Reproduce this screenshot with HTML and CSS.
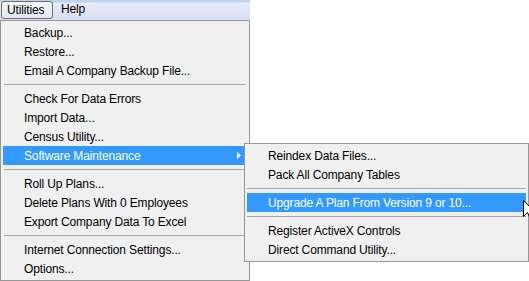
FILE: index.html
```html
<!DOCTYPE html>
<html lang="en">
<head>
  <meta charset="UTF-8">
  <meta name="viewport" content="width=device-width, initial-scale=1.0">
  <title>Utilities menu</title>
  <link rel="stylesheet" href="styles.css">
</head>
<body>
  <div class="screen">
    <div class="menubar">
      <span class="bar-item open">Utilities</span>
      <span class="bar-item">Help</span>
    </div>

    <div class="menu">
      <div class="item">Backup...</div>
      <div class="item">Restore...</div>
      <div class="item">Email A Company Backup File...</div>
      <div class="separator"></div>
      <div class="item">Check For Data Errors</div>
      <div class="item">Import Data...</div>
      <div class="item">Census Utility...</div>
      <div class="item selected">
        <span>Software Maintenance</span>
        <svg class="arrow" width="4" height="7" viewBox="0 0 4 7"><polygon points="0,0 4,3.5 0,7" fill="#ffffff"/></svg>
      </div>
      <div class="separator"></div>
      <div class="item">Roll Up Plans...</div>
      <div class="item">Delete Plans With 0 Employees</div>
      <div class="item">Export Company Data To Excel</div>
      <div class="separator"></div>
      <div class="item">Internet Connection Settings...</div>
      <div class="item">Options...</div>
    </div>

    <div class="menu submenu">
      <div class="item">Reindex Data Files...</div>
      <div class="item">Pack All Company Tables</div>
      <div class="separator"></div>
      <div class="item selected">Upgrade A Plan From Version 9 or 10...</div>
      <div class="separator"></div>
      <div class="item">Register ActiveX Controls</div>
      <div class="item">Direct Command Utility...</div>
    </div>

    <svg class="cursor" width="12" height="19" viewBox="0 0 12 19">
      <polygon points="0.5,0.5 0.5,16.5 4.5,12.5 7,18 9.5,17 7,11.5 11.5,11.5" fill="#ffffff" stroke="#000000" stroke-width="1"/>
    </svg>
  </div>
</body>
</html>
```

FILE: styles.css
```css
:root {
  --menu-bg: #F0F0F0;
  --menu-border: #979797;
  --highlight: #3399FF;
  --separator: #A8A8A8;
  --text: #000000;
}
body {
  margin: 0;
  background: #FFFFFF;
  font-family: 'Liberation Sans', Arial, sans-serif;
  font-size: 12px;
  letter-spacing: -0.15px;
  color: var(--text);
}
.screen {
  position: relative;
  width: 529px;
  height: 281px;
  overflow: hidden;
}
.menubar {
  display: flex;
  align-items: center;
  width: 250px;
  height: 20px;
  box-sizing: border-box;
  padding: 0 0 0 1px;
  background: linear-gradient(#BCD2EE 0, #BCD2EE 2px, #E8EDF8 3px, #E2E8F6 7px, #D6DFF2 20px);
}
.bar-item {
  height: 18px;
  line-height: 17px;
  padding: 0 0 0 8px;
}
.open {
  box-sizing: border-box;
  width: 52px;
  padding: 0 0 0 5px;
  border: 1px solid #6E6E6E;
  border-radius: 3px;
  background: linear-gradient(#F4F6FA, #E3E8F2);
}
.menu {
  width: 250px;
  box-sizing: border-box;
  padding: 2px;
  border: 1px solid var(--menu-border);
  background: var(--menu-bg);
}
.item {
  display: flex;
  align-items: center;
  justify-content: space-between;
  height: 19px;
  padding: 0 6px 0 21px;
  white-space: nowrap;
}
.selected {
  background: var(--highlight);
  color: #FFFFFF;
}
.separator {
  height: 1px;
  margin: 4px 1px;
  background: var(--separator);
}
.submenu {
  position: absolute;
  left: 244px;
  top: 143px;
  width: 285px;
}
.submenu .separator {
  margin: 4px 0;
}
.cursor {
  position: absolute;
  left: 523px;
  top: 200px;
}
```
